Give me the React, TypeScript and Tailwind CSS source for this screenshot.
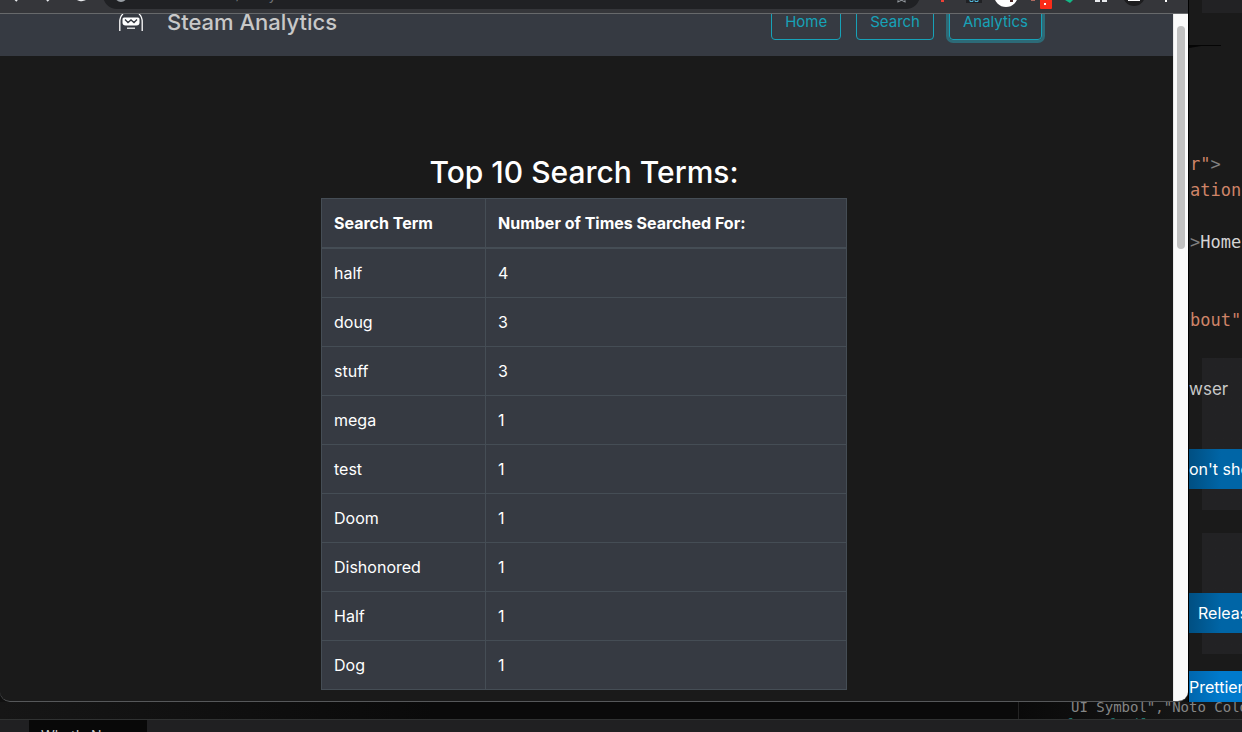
import React from "react";
import { BsStar } from "react-icons/bs";

const terms: [string, number][] = [
  ["half", 4], ["doug", 3], ["stuff", 3], ["mega", 1], ["test", 1],
  ["Doom", 1], ["Dishonored", 1], ["Half", 1], ["Dog", 1],
];

function BrowserToolbar() {
  return (
    <div className="relative h-[14px] shrink-0 overflow-hidden border-b border-[#67696b] bg-[#35363a]">
      <div className="absolute bottom-[4px] left-[103px] right-[268px] h-[28px] overflow-hidden rounded-full bg-[#202124]">
        <span className="absolute bottom-[7px] left-[12px] size-[12px] rounded-full border-2 border-[#9aa0a6]" />
        <span className="absolute bottom-[5px] left-[34px] text-sm leading-[18px] text-[#6f7377]">localhost:3000/analytics</span>
        <BsStar className="absolute bottom-[6px] right-[12px] size-[13px] text-[#9aa0a6]" />
      </div>
      <svg className="absolute left-0 top-0" width="103" height="13" viewBox="0 0 103 13">
        <path d="M14 -2l3 3M47 1l3 -3" stroke="#e8eaed" strokeWidth="2" />
        <path d="M76 -3a6 4 0 0 0 9 2" fill="none" stroke="#e8eaed" strokeWidth="3" />
      </svg>
      <svg className="absolute right-0 top-0" width="268" height="13" viewBox="920 0 268 13">
        <path d="M941 0h3v2h-3z" fill="#ee4035" />
        <path d="M966 0h16v3h-16z" fill="#202124" />
        <path d="M970 0v1.500h3v-1.500M975 0v1.500h3v-1.500" stroke="#52b6d9" fill="none" />
        <circle cx="1006" cy="-5" r="12" fill="#fff" />
        <path d="M1010 0h3v2h-3z" fill="#4a2826" />
        <path d="M1031 0h4v1h-4z" fill="#b06a60" />
        <rect x="1040" y="-4" width="12" height="13" rx="1" fill="#fa2c19" />
        <path d="M1044 3h2v2h-2z" fill="#fff" />
        <path d="M1065 0h8l-3 3z" fill="#13b887" />
        <path d="M1095 0h5v2h-5zM1102 0h5v2h-5z" fill="#e8eaed" />
        <circle cx="1134" cy="-5" r="11" fill="#1d1d1f" />
        <path d="M1128 0h12v1h-12zM1165 0h2v2h-2z" fill="#fff" />
      </svg>
    </div>
  );
}

function RobotLogo() {
  return (
    <svg width="24" height="18" viewBox="0 0 24 18" className="mb-[8px] mr-6" fill="none" stroke="#fff">
      <path d="M4 0C1.500 2 .8 4.500 .8 8v9M20 0c2.500 2 3.200 4.500 3.200 8v9" strokeWidth="1.300" />
      <path d="M5 3.500h14a1.500 1.500 0 0 1 1.500 1.500v3.500a3 3 0 0 1-3 3h-11a3 3 0 0 1-3-3v-3.500a1.500 1.500 0 0 1 1.500-1.500z" fill="#fff" stroke="none" />
      <path d="M6 5.500l3 3 3-2.500 3 2.500 3-3" stroke="#363a42" strokeWidth="1.400" />
      <path d="M8 14.200h8" strokeWidth="1.200" />
    </svg>
  );
}

const navLink = "rounded-[4px] border border-[#17a2b8] px-[13px] pb-[5px] pt-[7px] text-[15px] leading-6 text-[#17a2b8]";

function SiteHeader() {
  return (
    <header className="flex h-[42px] items-end overflow-hidden bg-[#363a42] pb-[16px] pl-[119px] pr-[131px]">
      <a href="#top" className="flex items-end text-[#c8c8c8]">
        <RobotLogo />
        <span className="pb-[3px] text-[22px] font-medium leading-[30px]">Steam Analytics</span>
      </a>
      <nav className="ml-auto flex items-end gap-[15px]">
        <a href="#home" className={navLink}>Home</a>
        <a href="#search" className={navLink}>Search</a>
        <a href="#analytics" className={"shadow-[0_0_0_3px_#2d6a77] " + navLink}>Analytics</a>
      </nav>
    </header>
  );
}

function TermsTable() {
  return (
    <section className="mx-auto w-[526px] max-w-full">
      <h2 className="mb-[6px] text-center text-[30px] font-medium leading-10 text-white">Top 10 Search Terms:</h2>
      <table className="w-full border-collapse bg-[#363a42] text-left text-white">
        <thead>
          <tr>
            <th className="w-[164px] border border-b-2 border-[#454d55] p-3 font-bold">Search Term</th>
            <th className="border border-b-2 border-[#454d55] p-3 font-bold">Number of Times Searched For:</th>
          </tr>
        </thead>
        <tbody>
          {terms.map(([term, count]) => (
            <tr key={term}>
              <td className="border border-[#454d55] p-3">{term}</td>
              <td className="border border-[#454d55] p-3">{count}</td>
            </tr>
          ))}
        </tbody>
      </table>
    </section>
  );
}

function BrowserWindow() {
  return (
    <div className="flex min-w-0 flex-1 flex-col overflow-hidden rounded-b-[10px] border-b border-[#56585a] bg-[#1a1a1a]">
      <BrowserToolbar />
      <div className="flex min-h-0 flex-1">
        <div className="min-w-0 flex-1">
          <SiteHeader />
          <main className="pr-[5px] pt-24">
            <TermsTable />
          </main>
        </div>
        <div className="w-[15px] shrink-0 border-l border-[#e8e8e8] bg-[#fafafa] pt-3">
          <div className="mx-auto h-[223px] w-2 rounded-full bg-[#c1c1c1]" />
        </div>
      </div>
    </div>
  );
}

const blueButton = "flex h-10 w-full items-center whitespace-nowrap bg-linear-to-r from-[#004f82] to-[#0065a6] to-60% text-base text-white";

function EditorStrip() {
  return (
    <aside className="flex w-[54px] shrink-0 flex-col overflow-hidden border-l border-black bg-[#1a1a1a] text-[#c8c8c8]">
      <div className="ml-[13px] h-[13px] shrink-0 bg-[#222224]" />
      <svg className="mt-[31px] shrink-0" width="34" height="4" viewBox="0 0 34 4">
        <path d="M0 1h32v1L12 2 0 4z" fill="#050505" />
      </svg>
      <pre className="mt-[103px] pl-px font-[DejaVu_Sans_Mono,monospace] text-[17px] leading-[26px] text-[#ce8468]">
        {'r"'}<span className="text-[#808080]">&gt;</span>{"\nation\n\n"}
        <span className="text-[#808080]">&gt;</span><span className="text-[#d4d4d4]">Home</span>
        {'\n\n\nbout"'}
      </pre>
      <div className="mt-[25px] flex h-[152px] shrink-0 flex-col bg-linear-to-r from-[#1a1a1a] from-25% to-[#222224] to-25%">
        <p className="mt-[18px] text-[17px] leading-[26px]">wser</p>
        <button className={"mt-[47px] " + blueButton}>on't show</button>
      </div>
      <div className="mt-[23px] flex h-[121px] shrink-0 flex-col bg-linear-to-r from-[#1a1a1a] from-25% to-[#222224] to-25%">
        <button className={"mt-[60px] pl-[9px] " + blueButton}>Release Notes</button>
      </div>
      <div className="mt-[17px] flex h-[31px] shrink-0 items-center whitespace-nowrap bg-linear-to-r from-[#0066ad] to-[#007acc] to-60% text-base text-white">
        Prettier
      </div>
    </aside>
  );
}

function BackgroundPanels() {
  return (
    <footer className="h-[30px] shrink-0 overflow-hidden bg-[#202022]">
      <div className="flex h-[18px] overflow-hidden border-b border-[#303232] bg-linear-to-r from-[#161616] to-[#0a0a0a] to-35%">
        <pre className="ml-auto w-[224px] shrink-0 overflow-hidden border-l border-[#242424] bg-linear-to-r from-[#0a0a0a] to-[#1a1a1a] pl-[52px] font-[DejaVu_Sans_Mono,monospace] text-sm leading-[18px] text-[#858585]">
          <span className="-mt-[4px] block">{'UI Symbol","Noto Color'}</span>
          <span className="-ml-[6px] -mt-px block text-[#20746d]">font-family</span>
        </pre>
      </div>
      <div className="flex h-3 overflow-hidden text-sm leading-[32px] text-[#c8c8c8]">
        <span className="w-[29px] shrink-0 pl-[5px]">:</span>
        <span className="w-[118px] shrink-0 bg-[#080808] pl-3">What's New</span>
      </div>
    </footer>
  );
}

export default function App() {
  return (
    <div className="flex h-screen min-h-[732px] flex-col overflow-hidden bg-[#101010] font-[Inter,sans-serif]">
      <div className="flex min-h-0 flex-1">
        <BrowserWindow />
        <EditorStrip />
      </div>
      <BackgroundPanels />
    </div>
  );
}
